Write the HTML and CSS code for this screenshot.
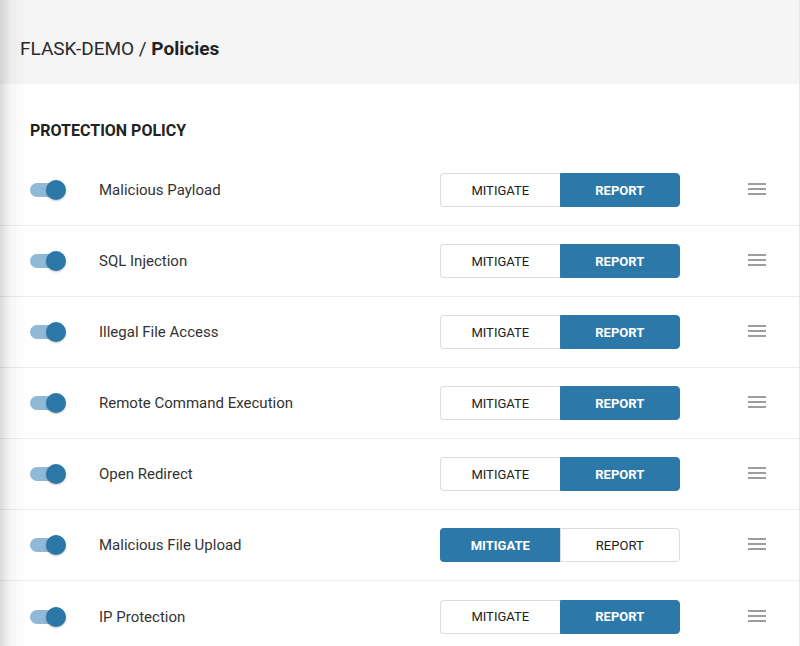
FILE: index.html
```html
<!DOCTYPE html>
<html>
<head>
<meta charset="utf-8">
<link rel="stylesheet" href="styles.css">
</head>
<body>
<div class="page">
  <header class="topbar">
    <span class="crumb">FLASK-DEMO / </span><strong class="crumb-current">Policies</strong>
  </header>
  <main class="content">
    <h2 class="section-title">PROTECTION POLICY</h2>
    <div class="policy">
      <span class="toggle"><span class="track"></span><span class="knob"></span></span>
      <span class="name">Malicious Payload</span>
      <div class="seg"><button class="opt">MITIGATE</button><button class="opt active">REPORT</button></div>
      <span class="menu"><i></i><i></i><i></i></span>
    </div>
    <div class="policy">
      <span class="toggle"><span class="track"></span><span class="knob"></span></span>
      <span class="name">SQL Injection</span>
      <div class="seg"><button class="opt">MITIGATE</button><button class="opt active">REPORT</button></div>
      <span class="menu"><i></i><i></i><i></i></span>
    </div>
    <div class="policy">
      <span class="toggle"><span class="track"></span><span class="knob"></span></span>
      <span class="name">Illegal File Access</span>
      <div class="seg"><button class="opt">MITIGATE</button><button class="opt active">REPORT</button></div>
      <span class="menu"><i></i><i></i><i></i></span>
    </div>
    <div class="policy">
      <span class="toggle"><span class="track"></span><span class="knob"></span></span>
      <span class="name">Remote Command Execution</span>
      <div class="seg"><button class="opt">MITIGATE</button><button class="opt active">REPORT</button></div>
      <span class="menu"><i></i><i></i><i></i></span>
    </div>
    <div class="policy">
      <span class="toggle"><span class="track"></span><span class="knob"></span></span>
      <span class="name">Open Redirect</span>
      <div class="seg"><button class="opt">MITIGATE</button><button class="opt active">REPORT</button></div>
      <span class="menu"><i></i><i></i><i></i></span>
    </div>
    <div class="policy">
      <span class="toggle"><span class="track"></span><span class="knob"></span></span>
      <span class="name">Malicious File Upload</span>
      <div class="seg"><button class="opt active">MITIGATE</button><button class="opt">REPORT</button></div>
      <span class="menu"><i></i><i></i><i></i></span>
    </div>
    <div class="policy">
      <span class="toggle"><span class="track"></span><span class="knob"></span></span>
      <span class="name">IP Protection</span>
      <div class="seg"><button class="opt">MITIGATE</button><button class="opt active">REPORT</button></div>
      <span class="menu"><i></i><i></i><i></i></span>
    </div>
  </main>
</div>
</body>
</html>
```
FILE: styles.css
```css
html, body {
  margin: 0;
  padding: 0;
  background: #fff;
  font-family: Roboto, "Liberation Sans", sans-serif;
  color: #222;
  overflow: hidden;
}
.page {
  width: 799px;
  min-height: 646px;
  border-right: 1px solid #e6e6e6;
  position: relative;
}
.page::before {
  content: "";
  position: absolute;
  left: 0;
  top: 0;
  bottom: 0;
  width: 26px;
  background: linear-gradient(to right, rgba(0,0,0,0.14), rgba(0,0,0,0.04) 40%, rgba(0,0,0,0));
  pointer-events: none;
  z-index: 2;
}
.topbar {
  height: 84px;
  background: #f5f5f5;
  box-sizing: border-box;
  padding: 37px 0 0 20px;
  font-size: 19px;
  line-height: 24px;
  color: #222;
}
.crumb { font-weight: 400; color: #2a2a2a; }
.crumb-current { font-weight: 700; }
.content { padding: 0; }
.section-title {
  margin: 0;
  padding: 37px 0 0 30px;
  height: 71px;
  box-sizing: border-box;
  font-size: 16px;
  line-height: 19px;
  font-weight: 700;
  color: #222;
}
.policy {
  display: grid;
  grid-template-columns: 36px 33px 1fr 240px 68px 18px;
  grid-template-areas: "tog . name seg . menu";
  align-items: center;
  height: 71px;
  box-sizing: border-box;
  padding: 0 33px 0 30px;
  border-bottom: 1px solid #ececec;
}
.policy:last-child { border-bottom: none; }
.toggle {
  grid-area: tog;
  position: relative;
  width: 36px;
  height: 20px;
  display: block;
}
.track {
  position: absolute;
  left: 0;
  top: 3px;
  width: 32px;
  height: 14px;
  border-radius: 7px;
  background: #8fb9d7;
}
.knob {
  position: absolute;
  left: 16px;
  top: 0;
  width: 20px;
  height: 20px;
  border-radius: 50%;
  background: #2b77a8;
  box-shadow: 0 1px 2px rgba(0,0,0,0.25);
}
.name {
  grid-area: name;
  font-size: 15px;
  color: #333;
}
.seg {
  grid-area: seg;
  display: flex;
  height: 34px;
}
.opt {
  flex: 1;
  margin: 0;
  font-family: Roboto, "Liberation Sans", sans-serif;
  font-size: 13px;
  font-weight: 400;
  color: #222;
  background: #fff;
  border: 1px solid #dcdcdc;
  padding: 0;
  cursor: pointer;
}
.opt:first-child { border-radius: 4px 0 0 4px; border-right: none; }
.opt:last-child { border-radius: 0 4px 4px 0; }
.opt.active {
  background: #2b78a9;
  border-color: #2b78a9;
  color: #fff;
  font-weight: 700;
}
.menu {
  grid-area: menu;
  display: flex;
  flex-direction: column;
  gap: 3px;
  width: 18px;
  margin-bottom: 2px;
}
.menu i {
  display: block;
  height: 2px;
  background: #9e9e9e;
}
```
